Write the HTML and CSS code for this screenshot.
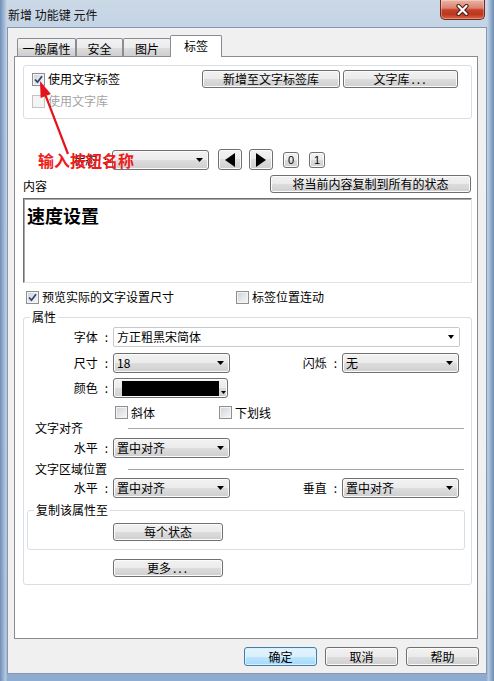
FILE: index.html
```html
<!DOCTYPE html>
<html lang="zh">
<head>
<meta charset="utf-8">
<title>新增 功能键 元件</title>
<link rel="stylesheet" href="styles.css">
</head>
<body>
<div class="window">
  <div class="titlebar">
    <span class="title">新增 功能键 元件</span>
    <div class="close">
      <svg width="13" height="12" viewBox="0 0 13 12"><path d="M2.5 2 L10.5 10 M10.5 2 L2.5 10" stroke="#4a1a12" stroke-width="4.2" stroke-linecap="round"/><path d="M2.5 2 L10.5 10 M10.5 2 L2.5 10" stroke="#fff" stroke-width="2.2" stroke-linecap="round"/></svg>
    </div>
  </div>
  <div class="client">
    <div class="tabs">
      <div class="tab t1">一般属性</div>
      <div class="tab t2">安全</div>
      <div class="tab t3">图片</div>
      <div class="tab active">标签</div>
    </div>
    <div class="panel">
      <div class="group g1">
        <div class="row r1">
          <div class="chk">
            <span class="cb"><svg width="11" height="11" viewBox="0 0 11 11"><path d="M2 5.5 L4.5 8.2 L9 2.3" stroke="#2f4579" stroke-width="1.8" fill="none"/></svg></span>
            <span>使用文字标签</span>
          </div>
          <div class="btns">
            <button class="btn w-add">新增至文字标签库</button>
            <button class="btn w-lib">文字库<span class="dots">...</span></button>
          </div>
        </div>
        <div class="row r2">
          <div class="chk disabled"><span class="cb"></span><span>使用文字库</span></div>
        </div>
      </div>

      <div class="status-row">
        <span class="lbl">状态<span class="colon">:</span></span>
        <div class="combo w-status"><span class="val"></span><svg class="arr" width="7" height="4" viewBox="0 0 7 4"><path d="M0 0h7L3.5 4z" fill="#000"/></svg></div>
        <button class="btn nav prev"><svg width="10" height="14" viewBox="0 0 10 14"><path d="M10 0V14L0 7z" fill="#000"/></svg></button>
        <button class="btn nav next"><svg width="10" height="14" viewBox="0 0 10 14"><path d="M0 0V14L10 7z" fill="#000"/></svg></button>
        <button class="btn mini m0">0</button>
        <button class="btn mini m1">1</button>
      </div>

      <div class="content-head">
        <span class="ctl-label">内容</span>
        <button class="btn w-copy">将当前内容复制到所有的状态</button>
      </div>
      <div class="textbox">速度设置</div>

      <div class="check-row">
        <div class="chk preview">
          <span class="cb"><svg width="11" height="11" viewBox="0 0 11 11"><path d="M2 5.5 L4.5 8.2 L9 2.3" stroke="#2f4579" stroke-width="1.8" fill="none"/></svg></span>
          <span>预览实际的文字设置尺寸</span>
        </div>
        <div class="chk"><span class="cb"></span><span>标签位置连动</span></div>
      </div>

      <fieldset class="attr">
        <legend>属性</legend>
        <div class="frow f-font">
          <span class="flbl">字体<span class="colon">:</span></span>
          <div class="font-field"><span class="val">方正粗黑宋简体</span><svg width="6" height="4" viewBox="0 0 6 4"><path d="M0 0h6L3 4z" fill="#000"/></svg></div>
        </div>
        <div class="frow f-size">
          <span class="flbl">尺寸<span class="colon">:</span></span>
          <div class="combo w-117"><span class="val">18</span><svg class="arr" width="7" height="4" viewBox="0 0 7 4"><path d="M0 0h7L3.5 4z" fill="#000"/></svg></div>
          <span class="flbl flbl2">闪烁<span class="colon">:</span></span>
          <div class="combo w-117"><span class="val">无</span><svg class="arr" width="7" height="4" viewBox="0 0 7 4"><path d="M0 0h7L3.5 4z" fill="#000"/></svg></div>
        </div>
        <div class="frow f-color">
          <span class="flbl">颜色<span class="colon">:</span></span>
          <div class="combo color-combo"><span class="swatch"></span><svg class="arr-sm" width="5" height="3" viewBox="0 0 5 3"><path d="M0 0h5L2.5 3z" fill="#000"/></svg></div>
        </div>
        <div class="frow f-checks">
          <div class="chk w-italic"><span class="cb"></span><span>斜体</span></div>
          <div class="chk"><span class="cb"></span><span>下划线</span></div>
        </div>
        <div class="hdr">
          <span class="hdr-text">文字对齐</span><span class="line"></span>
        </div>
        <div class="frow f-h1">
          <span class="flbl">水平<span class="colon">:</span></span>
          <div class="combo w-117"><span class="val">置中对齐</span><svg class="arr" width="7" height="4" viewBox="0 0 7 4"><path d="M0 0h7L3.5 4z" fill="#000"/></svg></div>
        </div>
        <div class="hdr hdr2">
          <span class="hdr-text">文字区域位置</span><span class="line"></span>
        </div>
        <div class="frow f-h2">
          <span class="flbl">水平<span class="colon">:</span></span>
          <div class="combo w-117"><span class="val">置中对齐</span><svg class="arr" width="7" height="4" viewBox="0 0 7 4"><path d="M0 0h7L3.5 4z" fill="#000"/></svg></div>
          <span class="flbl flbl2">垂直<span class="colon">:</span></span>
          <div class="combo w-117"><span class="val">置中对齐</span><svg class="arr" width="7" height="4" viewBox="0 0 7 4"><path d="M0 0h7L3.5 4z" fill="#000"/></svg></div>
        </div>
        <fieldset class="copy">
          <legend>复制该属性至</legend>
          <button class="btn w-state">每个状态</button>
        </fieldset>
        <button class="btn w-more">更多<span class="dots">...</span></button>
      </fieldset>

      <svg class="annot-arrow" width="100" height="120" viewBox="0 0 100 120">
        <path d="M53 97 L30.7 38.9" stroke="#e3141b" stroke-width="2.2" fill="none"/>
        <path d="M25 24 L35.9 36.9 L25.6 40.9 Z" fill="#e3141b"/>
      </svg>
      <div class="annot-text">输入按钮名称</div>
    </div>

    <div class="actions">
      <button class="btn act default">确定</button>
      <button class="btn act">取消</button>
      <button class="btn act">帮助</button>
    </div>
  </div>
</div>
</body>
</html>
```
FILE: styles.css
```css
* { box-sizing: border-box; }
html, body { margin: 0; padding: 0; }
body {
  width: 494px;
  height: 681px;
  overflow: hidden;
  font-family: "Noto Sans CJK SC", "Liberation Sans", sans-serif;
  font-size: 12px;
  line-height: 14px;
  color: #000;
  background: #b4c9e0;
}

.window {
  width: 494px;
  height: 681px;
  display: flex;
  flex-direction: column;
  padding: 0 7px 7px;
  background:
    linear-gradient(90deg, #6f8fb8 0, #b9cde3 6px, rgba(0,0,0,0) 7px, rgba(0,0,0,0) 487px, #b9cde3 488px, #6c8cb4 494px),
    linear-gradient(180deg, #cbd8e6 0, #c4d4e5 27px, #b3c9e0 60%, #8eabcf 100%);
}

.titlebar {
  height: 27px;
  flex: none;
  display: flex;
  align-items: flex-start;
}
.title {
  padding: 8px 0 0 1px;
  line-height: 14px;
  color: #111;
}
.close {
  margin-left: auto;
  margin-right: 2px;
  width: 45px;
  height: 20px;
  border: 1px solid #6b2a1f;
  border-top: none;
  border-radius: 0 0 5px 5px;
  background: linear-gradient(180deg, #e9b3a5 0, #dc8470 42%, #c6412a 52%, #bd361e 75%, #d8654a 100%);
  box-shadow: inset 0 0 0 1px rgba(255,255,255,0.3);
  display: flex;
  align-items: center;
  justify-content: center;
}

.client {
  flex: 1;
  border: 1px solid #8497ae;
  background: #f0f0f0;
  padding: 7px 8px 0 6px;
  display: flex;
  flex-direction: column;
}

.tabs {
  display: flex;
  align-items: flex-end;
  height: 21px;
  flex: none;
  padding-left: 3px;
}
.tab {
  height: 18px;
  border: 1px solid #898c95;
  border-bottom: none;
  border-radius: 2px 2px 0 0;
  background: linear-gradient(180deg, #f2f2f2 0, #ebebeb 50%, #dddddd 50%, #cfcfcf 100%);
  padding-top: 2px;
  line-height: 15px;
  text-align: center;
  white-space: nowrap;
}
.t1 { width: 59px; }
.t2 { width: 47px; }
.t3 { width: 48px; }
.tab.active {
  position: relative;
  z-index: 2;
  width: 52px;
  height: 22px;
  margin: 0 0 -1px -1px;
  background: #fff;
}

.panel {
  position: relative;
  width: 464px;
  height: 583px;
  flex: none;
  border: 1px solid #898c95;
  background: #fff;
  padding: 0 5px 0 8px;
}

.group {
  border: 1px solid #d5dfe5;
  border-radius: 3px;
}
.g1 {
  margin-top: 8px;
  height: 54px;
  padding: 4px 13px 0 8px;
}
.row { display: flex; align-items: center; }
.r1 { height: 18px; }
.r2 { height: 14px; margin-top: 6px; }
.btns { margin-left: auto; display: flex; gap: 3px; }

.chk {
  display: flex;
  align-items: center;
  gap: 3px;
  white-space: nowrap;
  line-height: 14px;
}
.cb {
  width: 13px;
  height: 13px;
  flex: none;
  border: 1px solid #8e8f8f;
  background: linear-gradient(135deg, #cdd1d7 0, #e6e7e9 55%, #f7f7f7 100%);
  box-shadow: inset 0 0 0 1px #f3f3f3;
  display: flex;
  align-items: center;
  justify-content: center;
}
.disabled { color: #a3a3a3; }
.disabled .cb {
  border-color: #c4c4c4;
  background: #f4f4f4;
  box-shadow: none;
}

.btn {
  font: inherit;
  font-size: 12px;
  line-height: 14px;
  color: #000;
  height: 18px;
  padding: 0;
  border: 1px solid #707070;
  border-radius: 3px;
  background: linear-gradient(180deg, #f2f2f2 0, #ebebeb 50%, #dddddd 50%, #cfcfcf 100%);
  box-shadow: inset 0 0 0 1px #fbfbfb;
  display: flex;
  align-items: center;
  justify-content: center;
  white-space: nowrap;
}
.dots { letter-spacing: 2px; margin-left: 2px; }
.w-add { width: 138px; }
.w-lib { width: 115px; }

.status-row {
  margin-top: 30px;
  height: 21px;
  display: flex;
  align-items: center;
}
.lbl, .flbl {
  width: 89px;
  flex: none;
  text-align: right;
  padding-right: 5px;
  white-space: nowrap;
  line-height: 14px;
}
.colon { margin-left: 7px; }

.combo {
  height: 20px;
  flex: none;
  display: flex;
  align-items: center;
  border: 1px solid #707070;
  border-radius: 3px;
  background: linear-gradient(180deg, #f2f2f2 0, #ebebeb 50%, #dddddd 50%, #cfcfcf 100%);
  box-shadow: inset 0 0 0 1px #fbfbfb;
  padding: 0 5px 0 3px;
  white-space: nowrap;
}
.combo .val { flex: 1; line-height: 14px; }
.w-status { width: 97px; }
.nav { width: 24px; height: 21px; margin-left: 9px; }
.next { margin-left: 7px; }
.mini {
  width: 16px;
  height: 16px;
  margin-left: 10px;
  font-family: "Liberation Sans", sans-serif;
  font-size: 11px;
}

.content-head {
  margin-top: 5px;
  height: 18px;
  display: flex;
  align-items: flex-end;
  justify-content: space-between;
}
.ctl-label { line-height: 14px; }
.w-copy { width: 201px; margin-right: 1px; }

.textbox {
  margin-top: 5px;
  height: 85px;
  border: 1px solid;
  border-color: #6f6f6f #e3e3e3 #e3e3e3 #6f6f6f;
  box-shadow: inset 1px 1px 0 #a9a9a9;
  padding: 6px 3px;
  font-size: 18px;
  font-weight: 700;
  line-height: 20px;
}

.check-row {
  margin-top: 7px;
  height: 14px;
  display: flex;
  align-items: center;
  padding-left: 3px;
}
.preview { width: 210px; }

fieldset {
  margin: 0;
  padding: 0;
  border: 1px solid #d5dfe5;
  border-radius: 3px;
  min-width: 0;
}
legend {
  margin-left: 6px;
  padding: 0 2px;
  line-height: 14px;
}
.attr {
  margin-top: 6px;
  padding-bottom: 7px;
}
.frow { display: flex; align-items: center; }
.f-font { margin-top: 3px; height: 20px; }
.f-size { margin-top: 6px; height: 20px; }
.f-color { margin-top: 5px; height: 20px; }
.f-checks { margin-top: 8px; height: 13px; padding-left: 91px; }
.f-h1 { margin-top: 4px; height: 20px; }
.f-h2 { margin-top: 3px; height: 20px; }
.flbl2 { width: 112px; }
.w-117 { width: 117px; }
.w-italic { width: 104px; }

.font-field {
  width: 347px;
  height: 20px;
  border: 1px solid #c9c9c9;
  border-radius: 2px;
  background: #fff;
  display: flex;
  align-items: center;
  padding: 0 5px 0 3px;
}
.font-field .val { flex: 1; line-height: 14px; }

.color-combo {
  width: 115px;
  padding: 2px 1px 1px 8px;
  align-items: stretch;
}
.swatch {
  width: 97px;
  background: #000;
}
.arr-sm { align-self: flex-end; margin: 0 0 2px 2px; }

.hdr {
  margin-top: 3px;
  height: 12px;
  display: flex;
  align-items: center;
  padding-left: 11px;
}
.hdr2 { margin-top: 5px; }
.hdr-text { width: 93px; flex: none; line-height: 12px; white-space: nowrap; }
.line {
  flex: 1;
  height: 1px;
  margin-right: 7px;
  background: #a6a6a6;
}

.copy {
  margin: 6px 6px 0 3px;
  padding-bottom: 8px;
}
.copy legend { line-height: 12px; }
.w-state { width: 110px; margin: 7px 0 0 85px; }
.w-more { width: 110px; margin: 9px 0 0 89px; }

.annot-arrow {
  position: absolute;
  left: 0;
  top: 0;
}
.annot-text {
  position: absolute;
  left: 23px;
  top: 94px;
  color: #ee1c1c;
  font-size: 16px;
  font-weight: 700;
  line-height: 18px;
  white-space: nowrap;
}

.actions {
  display: flex;
  justify-content: flex-end;
  gap: 8px;
  margin: 8px -1px 0 0;
}
.act { width: 73px; height: 19px; }
.btn.default {
  border-color: #3c7fb1;
  background: linear-gradient(180deg, #e5f4fc 0, #d9effc 50%, #bde6fd 50%, #a7d9f5 100%);
  box-shadow: inset 0 0 0 1px #dcf0fb;
}
```
